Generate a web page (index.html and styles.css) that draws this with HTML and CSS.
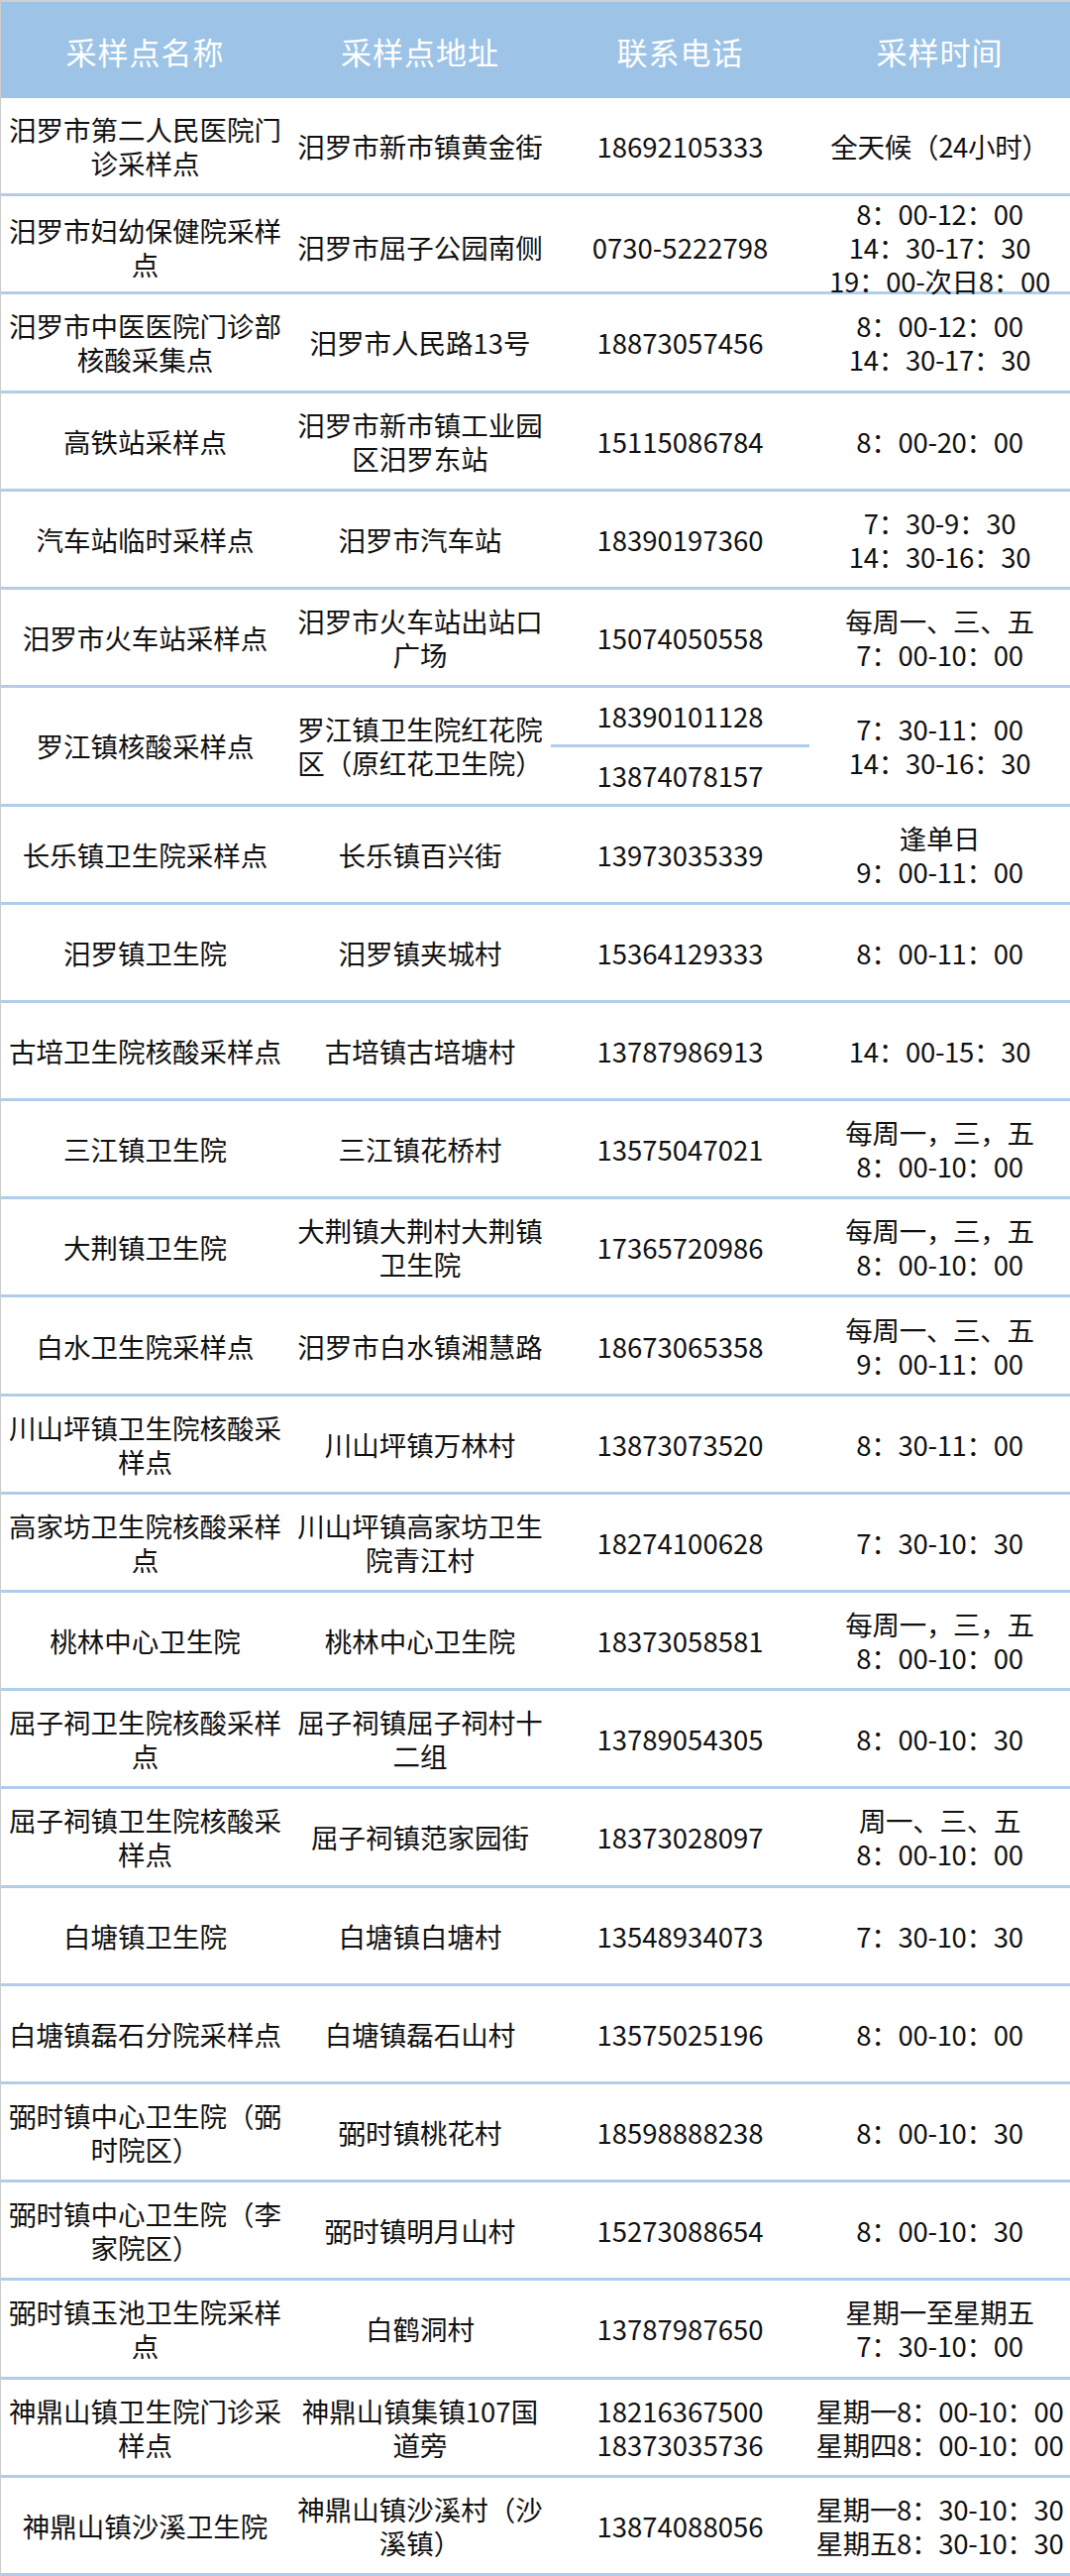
FILE: index.html
```html
<!DOCTYPE html>
<html lang="zh-CN">
<head>
<meta charset="utf-8">
<title>采样点</title>
<link rel="stylesheet" href="styles.css">
</head>
<body>
<div class="sheet">
  <div class="row head">
    <div class="c">采样点名称</div>
    <div class="c">采样点地址</div>
    <div class="c">联系电话</div>
    <div class="c">采样时间</div>
  </div>
  <div class="row"><div class="c">汨罗市第二人民医院门诊采样点</div><div class="c">汨罗市新市镇黄金街</div><div class="c">18692105333</div><div class="c t">全天候（24小时）</div></div>
  <div class="row"><div class="c">汨罗市妇幼保健院采样点</div><div class="c">汨罗市屈子公园南侧</div><div class="c">0730-5222798</div><div class="c t">8：00-12：00<br>14：30-17：30<br>19：00-次日8：00</div></div>
  <div class="row"><div class="c">汨罗市中医医院门诊部核酸采集点</div><div class="c">汨罗市人民路13号</div><div class="c">18873057456</div><div class="c t">8：00-12：00<br>14：30-17：30</div></div>
  <div class="row"><div class="c">高铁站采样点</div><div class="c">汨罗市新市镇工业园区汨罗东站</div><div class="c">15115086784</div><div class="c t">8：00-20：00</div></div>
  <div class="row"><div class="c">汽车站临时采样点</div><div class="c">汨罗市汽车站</div><div class="c">18390197360</div><div class="c t">7：30-9：30<br>14：30-16：30</div></div>
  <div class="row"><div class="c">汨罗市火车站采样点</div><div class="c">汨罗市火车站出站口广场</div><div class="c">15074050558</div><div class="c t">每周一、三、五<br>7：00-10：00</div></div>
  <div class="row tall"><div class="c">罗江镇核酸采样点</div><div class="c">罗江镇卫生院红花院区（原红花卫生院）</div><div class="c split"><div class="half top">18390101128</div><div class="half">13874078157</div></div><div class="c t">7：30-11：00<br>14：30-16：30</div></div>
  <div class="row"><div class="c">长乐镇卫生院采样点</div><div class="c">长乐镇百兴街</div><div class="c">13973035339</div><div class="c t">逢单日<br>9：00-11：00</div></div>
  <div class="row"><div class="c">汨罗镇卫生院</div><div class="c">汨罗镇夹城村</div><div class="c">15364129333</div><div class="c t">8：00-11：00</div></div>
  <div class="row"><div class="c">古培卫生院核酸采样点</div><div class="c">古培镇古培塘村</div><div class="c">13787986913</div><div class="c t">14：00-15：30</div></div>
  <div class="row"><div class="c">三江镇卫生院</div><div class="c">三江镇花桥村</div><div class="c">13575047021</div><div class="c t">每周一，三，五<br>8：00-10：00</div></div>
  <div class="row"><div class="c">大荆镇卫生院</div><div class="c">大荆镇大荆村大荆镇卫生院</div><div class="c">17365720986</div><div class="c t">每周一，三，五<br>8：00-10：00</div></div>
  <div class="row"><div class="c">白水卫生院采样点</div><div class="c">汨罗市白水镇湘慧路</div><div class="c">18673065358</div><div class="c t">每周一、三、五<br>9：00-11：00</div></div>
  <div class="row"><div class="c">川山坪镇卫生院核酸采样点</div><div class="c">川山坪镇万林村</div><div class="c">13873073520</div><div class="c t">8：30-11：00</div></div>
  <div class="row"><div class="c">高家坊卫生院核酸采样点</div><div class="c">川山坪镇高家坊卫生院青江村</div><div class="c">18274100628</div><div class="c t">7：30-10：30</div></div>
  <div class="row"><div class="c">桃林中心卫生院</div><div class="c">桃林中心卫生院</div><div class="c">18373058581</div><div class="c t">每周一，三，五<br>8：00-10：00</div></div>
  <div class="row"><div class="c">屈子祠卫生院核酸采样点</div><div class="c">屈子祠镇屈子祠村十二组</div><div class="c">13789054305</div><div class="c t">8：00-10：30</div></div>
  <div class="row"><div class="c">屈子祠镇卫生院核酸采样点</div><div class="c">屈子祠镇范家园街</div><div class="c">18373028097</div><div class="c t">周一、三、五<br>8：00-10：00</div></div>
  <div class="row"><div class="c">白塘镇卫生院</div><div class="c">白塘镇白塘村</div><div class="c">13548934073</div><div class="c t">7：30-10：30</div></div>
  <div class="row"><div class="c">白塘镇磊石分院采样点</div><div class="c">白塘镇磊石山村</div><div class="c">13575025196</div><div class="c t">8：00-10：00</div></div>
  <div class="row"><div class="c">弼时镇中心卫生院（弼时院区）</div><div class="c">弼时镇桃花村</div><div class="c">18598888238</div><div class="c t">8：00-10：30</div></div>
  <div class="row"><div class="c">弼时镇中心卫生院（李家院区）</div><div class="c">弼时镇明月山村</div><div class="c">15273088654</div><div class="c t">8：00-10：30</div></div>
  <div class="row"><div class="c">弼时镇玉池卫生院采样点</div><div class="c">白鹤洞村</div><div class="c">13787987650</div><div class="c t">星期一至星期五<br>7：30-10：00</div></div>
  <div class="row"><div class="c">神鼎山镇卫生院门诊采样点</div><div class="c">神鼎山镇集镇107国道旁</div><div class="c">18216367500<br>18373035736</div><div class="c t">星期一8：00-10：00<br>星期四8：00-10：00</div></div>
  <div class="row"><div class="c">神鼎山镇沙溪卫生院</div><div class="c">神鼎山镇沙溪村（沙溪镇）</div><div class="c">13874088056</div><div class="c t">星期一8：30-10：30<br>星期五8：30-10：30</div></div>
</div>
</body>
</html>
```

FILE: styles.css
```css
html, body {
  margin: 0;
  padding: 0;
  background: #ffffff;
}

.sheet {
  width: 1080px;
  box-sizing: border-box;
  border-left: 1px solid #cccccc;
  font-family: "Noto Sans CJK SC", "Noto Sans", sans-serif;
  font-size: 27.5px;
  line-height: 34px;
  color: #111111;
}

.row {
  display: grid;
  grid-template-columns: 291px 264px 261px 1fr;
  align-items: center;
  height: 99.2px;
  box-sizing: border-box;
  border-bottom: 3px solid #b0cdec;
}

.row.tall {
  height: 119.4px;
}

.head {
  height: 99px;
  background: #9dc3e6;
  border-top: 2px solid #cfcfcf;
  border-bottom: none;
  color: #ffffff;
  font-size: 31px;
  letter-spacing: 1px;
  padding-top: 2px;
}

.c {
  text-align: center;
  padding: 0 7px;
  word-break: break-all;
}

.c.t {
  padding: 0;
  white-space: nowrap;
  letter-spacing: -0.3px;
}

.head .c.t {
  letter-spacing: 1px;
}

.split {
  align-self: stretch;
  display: flex;
  flex-direction: column;
  padding: 0;
}

.half {
  flex: 1;
  display: flex;
  align-items: center;
  justify-content: center;
}

.half.top {
  border-bottom: 3px solid #b0cdec;
}
```
